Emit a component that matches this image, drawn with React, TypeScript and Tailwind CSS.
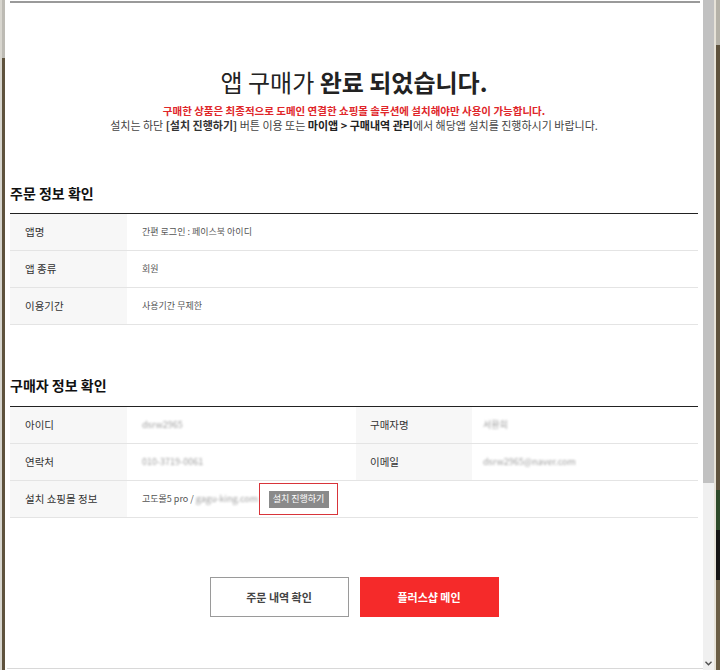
import React from "react";

const Blur = ({ children }: { children: React.ReactNode }) => (
  <span className="inline-block text-[#a0a0a0] blur-[0.9px]">{children}</span>
);

function Row({
  label,
  value,
  label2,
  value2,
  full,
}: {
  label: string;
  value: React.ReactNode;
  label2?: string;
  value2?: React.ReactNode;
  full?: boolean;
}) {
  return (
    <div className="flex h-[37px] border-b border-[#e4e4e4]">
      <div className={full ? "flex flex-1" : "flex w-[346px]"}>
        <div className="w-[117px] shrink-0 bg-[#f7f7f7] flex items-center pl-[15px] text-[10.5px] text-[#333]">
          {label}
        </div>
        <div className="flex-1 flex items-center pl-[15px] text-[9px] text-[#555]">{value}</div>
      </div>
      {label2 !== undefined && (
        <div className="flex flex-1">
          <div className="w-[116px] shrink-0 bg-[#f7f7f7] flex items-center pl-[14px] text-[10.5px] text-[#333]">
            {label2}
          </div>
          <div className="flex-1 flex items-center pl-[11px] text-[9px] text-[#555]">{value2}</div>
        </div>
      )}
    </div>
  );
}

export default function App() {
  return (
    <div className="w-[720px] h-[670px] flex overflow-hidden bg-white font-['Noto_Sans_CJK_KR','Noto_Sans',sans-serif]">
      {/* left frame strip */}
      <div className="w-[5px] flex shrink-0">
        <div className="w-[2px] bg-[#d8d6cf]" />
        <div className="w-[3px] flex flex-col">
          <div className="h-[58px] bg-[#bdbbb4]" />
          <div className="flex-1 bg-[#5e523d]" />
        </div>
      </div>

      {/* main */}
      <div className="w-[698px] shrink-0 flex flex-col bg-white">
        <div className="flex-1 flex flex-col pl-[5px] pr-[5px]">
          <div className="mt-[1px] h-[2px] bg-[#9a9a9a] mr-[-2px]" />

          <h1 className="mt-[67px] text-center text-[24px] leading-[24px] text-[#222]">
            앱 구매가 <span className="font-bold">완료 되었습니다.</span>
          </h1>
          <p className="mt-[10px] text-center text-[10.5px] leading-[14px] font-bold text-[#e0262a]">
            구매한 상품은 최종적으로 도메인 연결한 쇼핑몰 솔루션에 설치해야만 사용이 가능합니다.
          </p>
          <p className="text-center text-[11px] leading-[14px] text-[#444]">
            설치는 하단 <span className="font-bold text-[#333]">[설치 진행하기]</span> 버튼 이용 또는{" "}
            <span className="font-bold text-[#222]">마이앱 &gt; 구매내역 관리</span>에서 해당앱 설치를 진행하시기
            바랍니다.
          </p>

          <h2 className="mt-[53px] text-[14px] leading-[16px] font-bold text-[#111]">주문 정보 확인</h2>
          <div className="mt-[12px] h-[1px] bg-[#222]" />
          <div className="flex flex-col">
            <Row label="앱명" value="간편 로그인 : 페이스북 아이디" full />
            <Row label="앱 종류" value="회원" full />
            <Row label="이용기간" value="사용기간 무제한" full />
          </div>

          <h2 className="mt-[52px] text-[14px] leading-[16px] font-bold text-[#111]">구매자 정보 확인</h2>
          <div className="mt-[13px] h-[1px] bg-[#222]" />
          <div className="flex flex-col">
            <Row
              label="아이디"
              value={<Blur>dsrw2965</Blur>}
              label2="구매자명"
              value2={<Blur>서환희</Blur>}
            />
            <Row
              label="연락처"
              value={<Blur>010-3719-0061</Blur>}
              label2="이메일"
              value2={<Blur>dsrw2965@naver.com</Blur>}
            />
            <div className="flex h-[37px] border-b border-[#e4e4e4]">
              <div className="w-[117px] shrink-0 bg-[#f7f7f7] flex items-center pl-[15px] text-[10.5px] text-[#333]">
                설치 쇼핑몰 정보
              </div>
              <div className="flex-1 flex items-center pl-[15px] text-[9px] text-[#555]">
                <span>고도몰5 pro /&nbsp;</span>
                <Blur>gagu-king.com</Blur>
                <div className="ml-[1px] h-[32px] w-[79px] bg-[#d8343a] p-[1px] flex">
                  <div className="flex-1 bg-white flex items-center justify-center">
                    <div className="bg-[#8a8a8a] text-white text-[9px] w-[60px] h-[17px] flex items-center justify-center">
                      설치 진행하기
                    </div>
                  </div>
                </div>
              </div>
            </div>
          </div>

          <div className="mt-[59px] flex justify-center gap-[11px]">
            <button className="w-[139px] h-[40px] border border-[#9a9a9a] bg-white text-[11px] font-bold text-[#444]">
              주문 내역 확인
            </button>
            <button className="w-[139px] h-[40px] bg-[#f52a2a] text-[11px] font-bold text-white">
              플러스샵 메인
            </button>
          </div>
        </div>
        <div className="h-[1px] bg-[#d8d8d8] ml-[2px] mb-[1px]" />
      </div>

      {/* scrollbar */}
      <div className="w-[11px] shrink-0 flex flex-col bg-[#f0f0f0]">
        <div className="h-[483px] bg-[#c1c1c1]" />
        <div className="flex-1 flex flex-col justify-end items-center pb-[4px]">
          <svg width="7" height="5" viewBox="0 0 7 5">
            <path d="M0.5 0.8 L3.5 3.8 L6.5 0.8" fill="none" stroke="#505050" strokeWidth="1.4" />
          </svg>
        </div>
      </div>

      {/* right frame strip */}
      <div className="flex-1 flex">
        <div className="w-[2px] bg-[#e6e2d8]" />
        <div className="flex-1 flex flex-col">
          <div className="h-[45px] bg-[#b5b2a8]" />
          <div className="h-[445px] bg-[#5e523d]" />
          <div className="h-[40px] bg-[#2d4a2a]" />
          <div className="h-[50px] bg-[#151515]" />
          <div className="flex-1 bg-[#6a5d45]" />
        </div>
      </div>
    </div>
  );
}
